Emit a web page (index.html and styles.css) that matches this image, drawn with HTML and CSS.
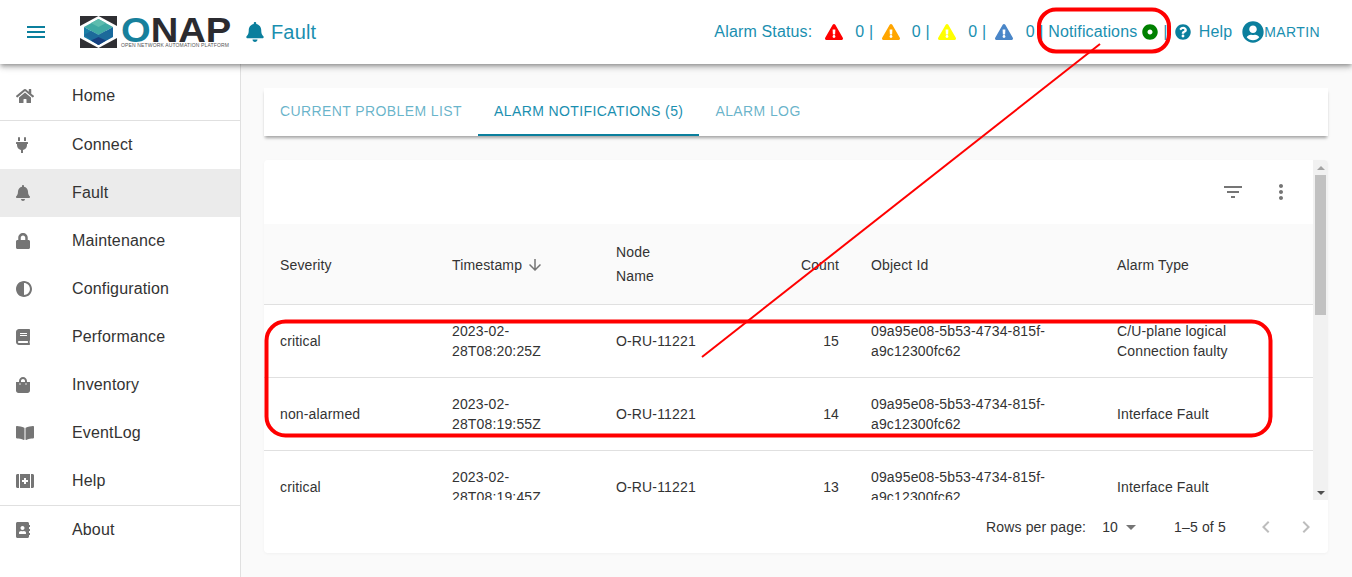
FILE: index.html
```html
<!DOCTYPE html>
<html lang="en">
<head>
    <meta charset="UTF-8">
    <meta name="viewport" content="width=device-width, initial-scale=1.0">
    <title>ONAP Fault</title>
    <link rel="stylesheet" href="styles.css">
</head>
<body>
    <svg class="sprites" width="0" height="0">
        <symbol id="i-bell" viewBox="0 0 448 512"><path d="M224 512c35.32 0 63.97-28.65 63.97-64H160.03c0 35.35 28.65 64 63.97 64zm215.39-149.71c-19.32-20.76-55.47-51.99-55.47-154.29 0-77.7-54.48-139.9-127.94-155.16V32c0-17.67-14.32-32-31.98-32s-31.98 14.33-31.98 32v20.84C118.56 68.1 64.08 130.3 64.08 208c0 102.3-36.15 133.53-55.47 154.29-6 6.45-8.66 14.16-8.61 21.71.11 16.4 12.98 32 32.1 32h383.8c19.12 0 32-15.6 32.1-32 .05-7.55-2.61-15.27-8.61-21.71z"/></symbol>
        <symbol id="i-warn" viewBox="0 0 576 512"><path d="M569.517 440.013C587.975 472.007 564.806 512 527.94 512H48.054c-36.937 0-59.999-40.055-41.577-71.987L246.423 23.985c18.467-32.009 64.72-31.951 83.154 0l239.94 416.028zM288 354c-25.405 0-46 20.595-46 46s20.595 46 46 46 46-20.595 46-46-20.595-46-46-46zm-43.673-165.346l7.418 136c.347 6.364 5.609 11.346 11.982 11.346h48.546c6.373 0 11.635-4.982 11.982-11.346l7.418-136c.375-6.874-5.098-12.654-11.982-12.654h-63.383c-6.884 0-12.356 5.78-11.981 12.654z"/></symbol>
    </svg>

    <header class="topbar">
        <button class="menu-btn" type="button">
            <svg class="menu-icon" viewBox="0 0 24 24"><path d="M3 18h18v-2H3v2zm0-5h18v-2H3v2zm0-7v2h18V6H3z"/></svg>
        </button>
        <div class="logo">
            <svg class="logo-cube" viewBox="0 0 37 32">
                <rect width="37" height="32" fill="#2f2f33"/>
                <polygon points="18.5,0 37,10 37,22 18.5,32 0,22 0,10" fill="#fff"/>
                <polygon points="18.5,3 33,11 18.5,19 4,11" fill="#3fa9a3"/>
                <polygon points="18.5,3 26,7 18.5,11 11,7" fill="#5dbcae"/>
                <polygon points="4,11 18.5,19 18.5,29 4,21" fill="#1a7fa6"/>
                <polygon points="33,11 18.5,19 18.5,29 33,21" fill="#17699e"/>
                <polygon points="18.5,19 26,15 33,19 18.5,29 4,19 11,15" fill="#1c6a9a"/>
                <polygon points="18.5,21 26,24.5 18.5,29 11,24.5" fill="#163f80"/>
            </svg>
            <div class="logo-words">
                <span class="logo-name"><span class="logo-o">O</span>NAP</span>
                <span class="logo-tag">OPEN NETWORK AUTOMATION PLATFORM</span>
            </div>
        </div>
        <div class="page-title">
            <svg class="title-bell"><use href="#i-bell"/></svg>
            <span>Fault</span>
        </div>

        <div class="status">
            <span class="status-label">Alarm Status:</span>
            <svg class="warn warn-red"><use href="#i-warn"/></svg><span class="status-count">0 |</span>
            <svg class="warn warn-orange"><use href="#i-warn"/></svg><span class="status-count">0 |</span>
            <svg class="warn warn-yellow"><use href="#i-warn"/></svg><span class="status-count">0 |</span>
            <svg class="warn warn-blue"><use href="#i-warn"/></svg><span class="status-count last">0 | Notifications</span>
            <svg class="dot" viewBox="0 0 512 512"><path d="M256 8C119.033 8 8 119.033 8 256s111.033 248 248 248 248-111.033 248-248S392.967 8 256 8zm80 248c0 44.112-35.888 80-80 80s-80-35.888-80-80 35.888-80 80-80 80 35.888 80 80z"/></svg>
            <span class="status-sep">|</span>
            <svg class="help-icon" viewBox="0 0 512 512"><path d="M504 256c0 136.997-111.043 248-248 248S8 392.997 8 256C8 119.083 119.043 8 256 8s248 111.083 248 248zM262.655 90c-54.497 0-89.255 22.957-116.549 63.758-3.536 5.286-2.353 12.415 2.715 16.258l34.699 26.31c5.205 3.947 12.621 3.008 16.665-2.122 17.864-22.658 30.113-35.797 57.303-35.797 20.429 0 45.698 13.148 45.698 32.958 0 14.976-12.363 22.667-32.534 33.976C247.128 238.528 216 254.941 216 296v4c0 6.627 5.373 12 12 12h56c6.627 0 12-5.373 12-12v-1.333c0-28.462 83.186-29.647 83.186-106.667 0-58.002-60.165-102-116.531-102zM256 338c-25.365 0-46 20.635-46 46 0 25.364 20.635 46 46 46s46-20.636 46-46c0-25.365-20.635-46-46-46z"/></svg>
            <span class="help-link">Help</span>
            <svg class="user-icon" viewBox="0 0 496 512"><path d="M248 8C111 8 0 119 0 256s111 248 248 248 248-111 248-248S385 8 248 8zm0 96c48.6 0 88 39.4 88 88s-39.4 88-88 88-88-39.4-88-88 39.4-88 88-88zm0 344c-58.7 0-111.3-26.6-146.5-68.2 18.8-35.4 55.6-59.8 98.5-59.8 2.4 0 4.8.4 7.1 1.1 13 4.2 26.6 6.9 40.9 6.9 14.3 0 28-2.7 40.9-6.9 2.3-.7 4.7-1.1 7.1-1.1 42.9 0 79.7 24.4 98.5 59.8C359.3 421.4 306.7 448 248 448z"/></svg>
            <span class="user-name">MARTIN</span>
        </div>
    </header>

    <div class="layout">
        <nav class="sidebar">
            <a class="nav-item nav-home">
                <svg class="nav-icon wide" viewBox="0 0 576 512"><path d="M280.37 148.26L96 300.11V464a16 16 0 0 0 16 16l112.06-.29a16 16 0 0 0 15.92-16V368a16 16 0 0 1 16-16h64a16 16 0 0 1 16 16v95.64a16 16 0 0 0 16 16.05L464 480a16 16 0 0 0 16-16V300L295.67 148.26a12.19 12.19 0 0 0-15.3 0zM571.6 251.47L488 182.56V44.05a12 12 0 0 0-12-12h-56a12 12 0 0 0-12 12v72.61L318.47 43a48 48 0 0 0-61 0L4.34 251.47a12 12 0 0 0-1.6 16.9l25.5 31A12 12 0 0 0 45.15 301l235.22-193.74a12.19 12.19 0 0 1 15.3 0L530.9 301a12 12 0 0 0 16.9-1.6l25.5-31a12 12 0 0 0-1.7-16.93z"/></svg>
                Home
            </a>
            <hr class="nav-divider">
            <a class="nav-item">
                <svg class="nav-icon plug" viewBox="0 0 384 512"><path d="M320,32a32,32,0,0,0-64,0v96h64Zm48,128H16A16,16,0,0,0,0,176v32a16,16,0,0,0,16,16H32v32A160.07,160.07,0,0,0,160,412.8V512h64V412.8A160.07,160.07,0,0,0,352,256V224h16a16,16,0,0,0,16-16V176A16,16,0,0,0,368,160ZM128,32a32,32,0,0,0-64,0v96h64Z"/></svg>
                Connect
            </a>
            <a class="nav-item active">
                <svg class="nav-icon narrow"><use href="#i-bell"/></svg>
                Fault
            </a>
            <a class="nav-item">
                <svg class="nav-icon narrow" viewBox="0 0 448 512"><path d="M400 224h-24v-72C376 68.2 307.8 0 224 0S72 68.2 72 152v72H48c-26.5 0-48 21.5-48 48v192c0 26.5 21.5 48 48 48h352c26.5 0 48-21.5 48-48V272c0-26.5-21.5-48-48-48zm-104 0H152v-72c0-39.7 32.3-72 72-72s72 32.3 72 72v72z"/></svg>
                Maintenance
            </a>
            <a class="nav-item">
                <svg class="nav-icon square" viewBox="8 8 496 496"><path d="M8 256c0 136.966 111.033 248 248 248s248-111.034 248-248S392.966 8 256 8 8 119.033 8 256zm248 184V72c101.705 0 184 82.311 184 184 0 101.705-82.311 184-184 184z"/></svg>
                Configuration
            </a>
            <a class="nav-item">
                <svg class="nav-icon narrow" viewBox="0 0 448 512"><path d="M448 360V24c0-13.3-10.7-24-24-24H96C43 0 0 43 0 96v320c0 53 43 96 96 96h328c13.3 0 24-10.7 24-24v-16c0-7.5-3.5-14.3-8.9-18.7-4.2-15.4-4.2-59.3 0-74.7 5.4-4.3 8.9-11.1 8.9-18.6zM128 134c0-3.3 2.7-6 6-6h212c3.3 0 6 2.7 6 6v20c0 3.3-2.7 6-6 6H134c-3.3 0-6-2.7-6-6v-20zm0 64c0-3.3 2.7-6 6-6h212c3.3 0 6 2.7 6 6v20c0 3.3-2.7 6-6 6H134c-3.3 0-6-2.7-6-6v-20zm253.4 250H96c-17.7 0-32-14.3-32-32 0-17.6 14.4-32 32-32h285.4c-1.9 17.1-1.9 46.9 0 64z"/></svg>
                Performance
            </a>
            <a class="nav-item">
                <svg class="nav-icon narrow" viewBox="0 0 448 512"><path d="M352 160v-32C352 57.42 294.579 0 224 0 153.42 0 96 57.42 96 128v32H0v272c0 44.183 35.817 80 80 80h288c44.183 0 80-35.817 80-80V160h-96zm-192-32c0-35.29 28.71-64 64-64s64 28.71 64 64v32H160v-32zm160 120c-13.255 0-24-10.745-24-24s10.745-24 24-24 24 10.745 24 24-10.745 24-24 24zm-192 0c-13.255 0-24-10.745-24-24s10.745-24 24-24 24 10.745 24 24-10.745 24-24 24z"/></svg>
                Inventory
            </a>
            <a class="nav-item">
                <svg class="nav-icon wide" viewBox="0 0 576 512"><path d="M542.22 32.05c-54.8 3.11-163.72 14.43-230.96 55.59-4.64 2.84-7.27 7.89-7.27 13.17v363.87c0 11.55 12.63 18.85 23.28 13.49 69.18-34.82 169.23-44.32 218.7-46.92 16.89-.89 30.02-14.43 30.02-30.66V62.75c.01-17.71-15.35-31.74-33.77-30.7zM264.73 87.64C197.5 46.48 88.58 35.17 33.78 32.05 15.36 31.01 0 45.04 0 62.75V400.6c0 16.24 13.13 29.78 30.02 30.66 49.49 2.6 149.59 12.11 218.77 46.95 10.62 5.35 23.21-1.94 23.21-13.46V100.63c0-5.29-2.62-10.14-7.27-12.99z"/></svg>
                EventLog
            </a>
            <a class="nav-item">
                <svg class="nav-icon wide" viewBox="0 0 576 512"><path d="M0 80v352c0 26.5 21.5 48 48 48h48V32H48C21.5 32 0 53.5 0 80zm128 400h320V32H128v448zm64-248c0-4.4 3.6-8 8-8h56v-56c0-4.4 3.6-8 8-8h48c4.4 0 8 3.6 8 8v56h56c4.4 0 8 3.6 8 8v48c0 4.4-3.6 8-8 8h-56v56c0 4.4-3.6 8-8 8h-48c-4.4 0-8-3.6-8-8v-56h-56c-4.4 0-8-3.6-8-8v-48zM528 32h-48v448h48c26.5 0 48-21.5 48-48V80c0-26.5-21.5-48-48-48z"/></svg>
                Help
            </a>
            <hr class="nav-divider">
            <a class="nav-item">
                <svg class="nav-icon narrow" viewBox="0 0 448 512"><path d="M436 160c6.6 0 12-5.4 12-12v-40c0-6.6-5.4-12-12-12h-20V48c0-26.5-21.5-48-48-48H48C21.5 0 0 21.5 0 48v416c0 26.5 21.5 48 48 48h320c26.5 0 48-21.5 48-48v-48h20c6.6 0 12-5.4 12-12v-40c0-6.6-5.4-12-12-12h-20v-64h20c6.6 0 12-5.4 12-12v-40c0-6.6-5.4-12-12-12h-20v-64h20zm-228-32c35.3 0 64 28.7 64 64s-28.7 64-64 64-64-28.7-64-64 28.7-64 64-64zm112 236.8c0 10.6-10 19.2-22.4 19.2H118.4C106 384 96 375.4 96 364.8v-19.2c0-31.8 30.1-57.6 67.2-57.6h5c12.3 5.1 25.7 8 39.8 8s27.6-2.9 39.8-8h5c37.1 0 67.2 25.8 67.2 57.6v19.2z"/></svg>
                About
            </a>
        </nav>

        <main class="content">
            <div class="tabs">
                <a class="tab">Current Problem List</a>
                <a class="tab tab-active">Alarm Notifications (5)</a>
                <a class="tab">Alarm Log</a>
            </div>

            <section class="table-card">
                <div class="table-view">
                    <div class="table-scroll">
                        <div class="toolbar">
                            <svg class="tool-icon tool-filter" viewBox="0 0 24 24"><path d="M10 18h4v-2h-4v2zM3 6v2h18V6H3zm3 7h12v-2H6v2z"/></svg>
                            <svg class="tool-icon" viewBox="0 0 24 24"><path d="M12 8c1.1 0 2-.9 2-2s-.9-2-2-2-2 .9-2 2 .9 2 2 2zm0 2c-1.1 0-2 .9-2 2s.9 2 2 2 2-.9 2-2-.9-2-2-2zm0 6c-1.1 0-2 .9-2 2s.9 2 2 2 2-.9 2-2-.9-2-2-2z"/></svg>
                        </div>
                        <table class="alarms">
                            <colgroup>
                                <col class="col-severity">
                                <col class="col-time">
                                <col class="col-node">
                                <col class="col-count">
                                <col class="col-object">
                                <col class="col-type">
                            </colgroup>
                            <thead>
                                <tr>
                                    <th class="single">Severity</th>
                                    <th class="single">Timestamp <svg class="sort-icon" viewBox="0 0 24 24"><path d="M20 12l-1.41-1.41L13 16.17V4h-2v12.17l-5.58-5.59L4 12l8 8 8-8z"/></svg></th>
                                    <th>Node<br>Name</th>
                                    <th class="single num">Count</th>
                                    <th class="single">Object Id</th>
                                    <th class="single">Alarm Type</th>
                                </tr>
                            </thead>
                            <tbody>
                                <tr>
                                    <td>critical</td>
                                    <td>2023-02-28T08:20:25Z</td>
                                    <td>O-RU-11221</td>
                                    <td class="num">15</td>
                                    <td>09a95e08-5b53-4734-815f-a9c12300fc62</td>
                                    <td>C/U-plane logical Connection faulty</td>
                                </tr>
                                <tr>
                                    <td>non-alarmed</td>
                                    <td>2023-02-28T08:19:55Z</td>
                                    <td>O-RU-11221</td>
                                    <td class="num">14</td>
                                    <td>09a95e08-5b53-4734-815f-a9c12300fc62</td>
                                    <td>Interface Fault</td>
                                </tr>
                                <tr>
                                    <td>critical</td>
                                    <td>2023-02-28T08:19:45Z</td>
                                    <td>O-RU-11221</td>
                                    <td class="num">13</td>
                                    <td>09a95e08-5b53-4734-815f-a9c12300fc62</td>
                                    <td>Interface Fault</td>
                                </tr>
                            </tbody>
                        </table>
                    </div>
                    <!-- scrollbar is drawn, headless browser hides the real one -->
                    <div class="scrollbar">
                        <span class="arrow-up"></span>
                        <span class="thumb"></span>
                        <span class="arrow-down"></span>
                    </div>
                </div>

                <div class="pagination">
                    <span>Rows per page:</span>
                    <span class="page-size">10</span>
                    <svg class="page-caret" viewBox="0 0 24 24"><path d="M7 10l5 5 5-5z"/></svg>
                    <span class="page-range">1–5 of 5</span>
                    <svg class="page-arrow" viewBox="0 0 24 24"><path d="M15.41 7.41L14 6l-6 6 6 6 1.41-1.41L10.83 12z"/></svg>
                    <svg class="page-arrow" viewBox="0 0 24 24"><path d="M10 6L8.59 7.41 13.17 12l-4.58 4.59L10 18l6-6z"/></svg>
                </div>
            </section>
        </main>
    </div>

    <!-- red markup drawn over the screenshot -->
    <svg class="markup" viewBox="0 0 1352 577">
        <rect x="1039" y="9.5" width="130" height="42" rx="17"/>
        <rect x="266.5" y="321.5" width="1004" height="114" rx="19"/>
        <line x1="1100" y1="44" x2="702" y2="357"/>
    </svg>
</body>
</html>
```

FILE: styles.css
```css
* {
    box-sizing: border-box;
}

html, body {
    height: 100%;
}

body {
    margin: 0;
    overflow: hidden;
    position: relative;
    background-color: #fafafa;
    font-family: "Liberation Sans", Arial, sans-serif;
    font-size: 16px;
    letter-spacing: 0.15px;
    color: #333;
}

.sprites {
    display: block;
    height: 0;
}

/* top bar */
.topbar {
    position: relative;
    z-index: 2;
    height: 64px;
    display: flex;
    align-items: center;
    padding: 0 32px 0 24px;
    background-color: #fff;
    box-shadow: 0 2px 4px -1px rgba(0, 0, 0, 0.3), 0 4px 5px 0 rgba(0, 0, 0, 0.14), 0 1px 10px 0 rgba(0, 0, 0, 0.12);
    color: #1a8fb0;
}

.menu-btn {
    width: 24px;
    height: 24px;
    padding: 0;
    border: none;
    background: none;
}

.menu-icon {
    display: block;
    width: 24px;
    height: 24px;
    fill: #0b7f9d;
}

.logo {
    display: flex;
    align-items: flex-start;
    margin-left: 32px;
    height: 32px;
    gap: 4px;
}

.logo-cube {
    width: 37px;
    height: 32px;
}

.logo-words {
    display: flex;
    flex-direction: column;
    width: 110px;
}

.logo-name {
    font-size: 35px;
    line-height: 27px;
    font-weight: bold;
    letter-spacing: 0;
    color: #2b2b30;
    transform: scaleX(1.09);
    transform-origin: left center;
}

.logo-o {
    color: #17809c;
}

.logo-tag {
    font-size: 5px;
    line-height: 5px;
    white-space: nowrap;
    color: #555;
}

.page-title {
    display: flex;
    align-items: center;
    margin-left: 15px;
    font-size: 20px;
    gap: 7px;
}

.title-bell {
    width: 18px;
    height: 20px;
    fill: #0b7f9d;
}

.status {
    display: flex;
    align-items: center;
    margin-left: auto;
    white-space: nowrap;
}

.status-label {
    margin-right: 13px;
}

.status-count {
    margin: 0 8.5px 0 12px;
}

.status-count.last {
    margin-left: 13px;
    margin-right: 5px;
}

.warn {
    width: 18px;
    height: 16px;
}

.warn-red { fill: #f00; }
.warn-orange { fill: #ffa500; }
.warn-yellow { fill: #ff0; }
.warn-blue { fill: #4a86c8; }

.dot {
    width: 16px;
    height: 16px;
    fill: #008000;
}

.status-sep {
    margin: 0 7px 0 5px;
}

.help-icon {
    width: 16px;
    height: 16px;
    fill: #0b7f9d;
}

.help-link {
    margin-left: 8px;
}

.user-icon {
    width: 22px;
    height: 22px;
    margin-left: 10px;
    fill: #0b7f9d;
}

.user-name {
    font-size: 14px;
    letter-spacing: 0.4px;
}

/* page body */
.layout {
    display: flex;
    height: 513px;
}

.sidebar {
    flex: 0 0 241px;
    padding-top: 8px;
    background-color: #fff;
    border-right: 1px solid #e0e0e0;
}

.nav-item {
    height: 48px;
    display: flex;
    align-items: center;
    padding-left: 16px;
    color: #333;
}

.nav-item.active {
    background-color: #ebebeb;
}

.nav-icon {
    height: 16px;
    fill: #757575;
}

.nav-icon.wide {
    width: 18px;
    margin-right: 38px;
}

.nav-icon.narrow {
    width: 14px;
    margin-right: 42px;
}

.nav-icon.plug {
    width: 12px;
    margin-right: 44px;
}

.nav-icon.square {
    width: 16px;
    margin-right: 40px;
}

.nav-divider {
    height: 1px;
    margin: 0;
    border: none;
    background-color: #e0e0e0;
}

.content {
    flex: 1;
    min-width: 0;
    padding: 24px 24px 24px 23px;
}

/* tabs */
.tabs {
    display: flex;
    height: 48px;
    background-color: #fff;
    box-shadow: 0 3px 3px -1px rgba(0, 0, 0, 0.35);
}

.tab {
    height: 48px;
    padding: 0 16px;
    line-height: 46px;
    font-size: 14px;
    letter-spacing: 0.4px;
    text-transform: uppercase;
    color: rgba(26, 143, 176, 0.68);
}

.tab-active {
    color: #1a8fb0;
    border-bottom: 2px solid #0b7f9d;
}

/* table */
.table-card {
    margin-top: 24px;
    height: 393px;
    background-color: #fff;
    border-radius: 4px;
    box-shadow: 0 1px 3px rgba(0, 0, 0, 0.04);
    overflow: hidden;
}

.table-view {
    display: flex;
    height: 340px;
}

.table-scroll {
    flex: 1;
    min-width: 0;
    overflow: hidden;
}

.toolbar {
    height: 64px;
    display: flex;
    justify-content: flex-end;
    align-items: center;
    gap: 24px;
    padding-right: 20px;
}

.tool-icon {
    width: 24px;
    height: 24px;
    fill: #757575;
}

.alarms {
    width: 100%;
    table-layout: fixed;
    border-collapse: collapse;
    font-size: 14px;
    line-height: 20px;
    color: #333;
}

.col-severity { width: 172px; }
.col-time { width: 164px; }
.col-node { width: 132px; }
.col-count { width: 123px; }
.col-object { width: 246px; }
.col-type { width: 213px; }

.alarms th {
    padding: 16px;
    font-weight: normal;
    line-height: 24px;
    text-align: left;
    background-color: #fafafa;
    border-bottom: 1px solid #e0e0e0;
}

.alarms th.single {
    padding-top: 18px;
}

.alarms td {
    padding: 16px;
    border-bottom: 1px solid #e0e0e0;
}

.alarms .num {
    text-align: right;
}

.sort-icon {
    width: 18px;
    height: 18px;
    vertical-align: -4px;
    fill: #757575;
}

/* drawn scrollbar */
.scrollbar {
    flex: 0 0 15px;
    display: flex;
    flex-direction: column;
    align-items: center;
    padding: 0 2px;
    background-color: #f1f1f1;
}

.arrow-up {
    margin: 6px 0 5px;
    border-left: 4px solid transparent;
    border-right: 4px solid transparent;
    border-bottom: 4px solid #a3a3a3;
}

.thumb {
    width: 100%;
    height: 140px;
    background-color: #c1c1c1;
}

.arrow-down {
    margin-top: auto;
    margin-bottom: 5px;
    border-left: 4px solid transparent;
    border-right: 4px solid transparent;
    border-top: 4px solid #505050;
}

/* pagination */
.pagination {
    height: 53px;
    display: flex;
    align-items: center;
    padding-left: 722px;
    font-size: 14px;
    color: #333;
}

.page-size {
    margin-left: 16px;
}

.page-caret {
    width: 24px;
    height: 24px;
    margin-left: 1px;
    fill: #757575;
}

.page-range {
    margin-left: 31px;
}

.page-arrow {
    width: 24px;
    height: 24px;
    margin-left: 16px;
    fill: #bdbdbd;
}

.page-range + .page-arrow {
    margin-left: 28px;
}

/* red annotation layer */
.markup {
    position: absolute;
    top: 0;
    left: 0;
    z-index: 5;
    width: 1352px;
    height: 577px;
    pointer-events: none;
    fill: none;
    stroke: #f00;
}

.markup rect {
    stroke-width: 4;
}

.markup line {
    stroke-width: 2;
}
```
